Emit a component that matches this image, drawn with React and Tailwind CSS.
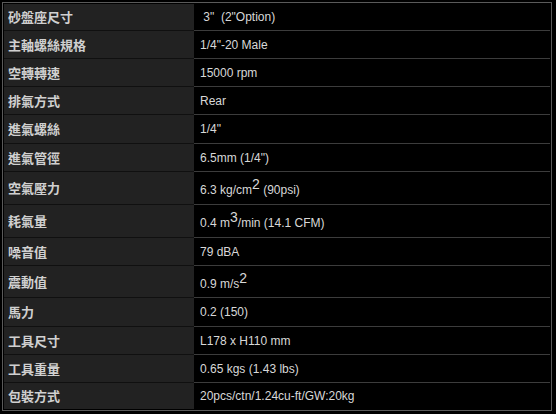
import React from "react";

// spec sheet rows: label / value / row height (px, incl. bottom rule)
const Sup = ({ children }) => (
  <sup className="text-[14px] -top-[5px]">{children}</sup>
);

const rows = [
  { k: "砂盤座尺寸", v: ' 3"  (2"Option)', h: "h-[27px]" },
  { k: "主軸螺絲規格", v: '1/4"-20 Male', h: "h-[28px]" },
  { k: "空轉轉速", v: "15000 rpm", h: "h-[28px]" },
  { k: "排氣方式", v: "Rear", h: "h-[28px]" },
  { k: "進氣螺絲", v: '1/4"', h: "h-[29px]" },
  { k: "進氣管徑", v: '6.5mm (1/4")', h: "h-[28px]" },
  {
    k: "空氣壓力",
    v: (
      <>
        6.3 kg/cm<Sup>2</Sup> (90psi)
      </>
    ),
    h: "h-[33px]",
    sup: true,
  },
  {
    k: "耗氣量",
    v: (
      <>
        0.4 m<Sup>3</Sup>/min (14.1 CFM)
      </>
    ),
    h: "h-[33px]",
    sup: true,
  },
  { k: "噪音值", v: "79 dBA", h: "h-[28px]" },
  {
    k: "震動值",
    v: (
      <>
        0.9 m/s<Sup>2</Sup>
      </>
    ),
    h: "h-[32px]",
    sup: true,
  },
  { k: "馬力", v: "0.2 (150)", h: "h-[29px]" },
  { k: "工具尺寸", v: "L178 x H110 mm", h: "h-[28px]" },
  { k: "工具重量", v: "0.65 kgs (1.43 lbs)", h: "h-[28px]" },
  { k: "包裝方式", v: "20pcs/ctn/1.24cu-ft/GW:20kg", h: "h-[26px]" },
];

export default function App() {
  return (
    <div className="w-[556px] h-[414px] bg-black pt-[2px] pl-[2px]">
      <div className="w-[550px] border border-[#5a5a5a] p-px bg-black flex flex-col">
        {rows.map((r, i) => {
          const last = i === rows.length - 1;
          return (
            <div key={r.k} className={`flex ${r.h}`}>
              <div
                className={`w-[190px] bg-[#222222] flex items-center pl-[4px] text-[13px] font-bold text-[#d0d0d0] ${
                  last ? "" : "border-b border-[#101010]"
                }`}
                style={{ fontFamily: '"Noto Sans CJK TC", "Noto Sans CJK SC", sans-serif' }}
              >
                {r.k}
              </div>
              <div
                className={`flex-1 bg-black flex items-center pl-[6px] text-[12px] text-[#d8d8d8] whitespace-pre ${
                  r.sup ? "pt-[4px]" : ""
                } ${last ? "" : "border-b border-[#3c3c3c]"}`}
                style={{ fontFamily: '"Liberation Sans", Arial, sans-serif' }}
              >
                <span>{r.v}</span>
              </div>
            </div>
          );
        })}
      </div>
    </div>
  );
}
